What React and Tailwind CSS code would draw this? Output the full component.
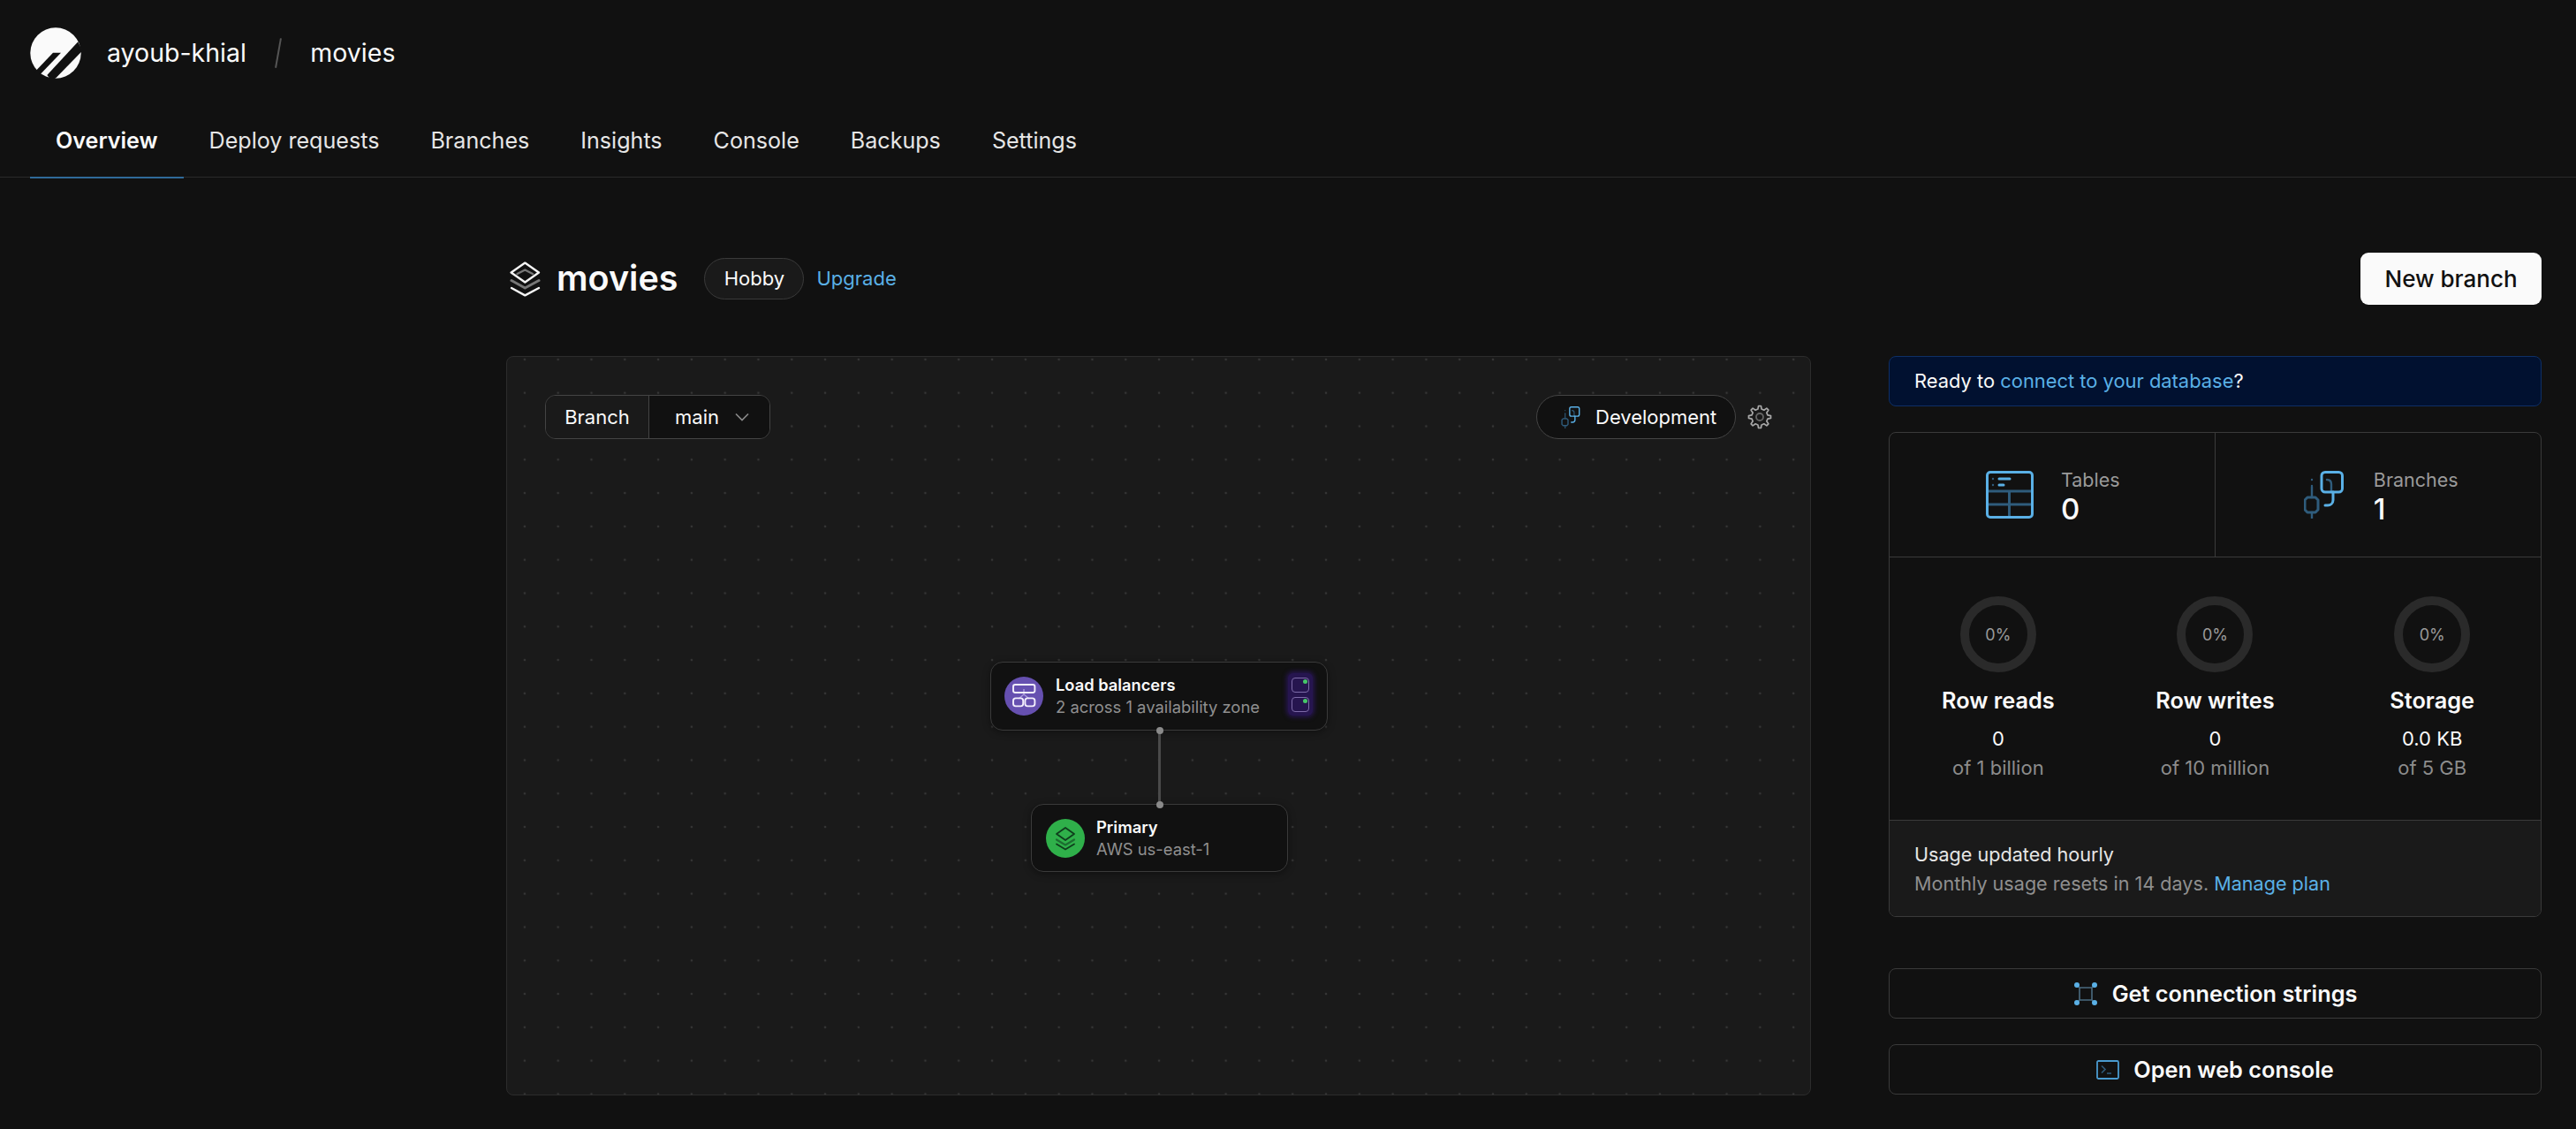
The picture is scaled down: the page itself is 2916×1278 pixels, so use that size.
import React from "react";

const BLUE = "#5ab0e6";
const DIM = "#2f5c7c";

function Logo() {
  return (
    <svg width="58" height="58" viewBox="0 0 58 58" className="shrink-0">
      <circle cx="29" cy="29" r="28.7" fill="#fafafa" />
      <polygon points="7.7,48 26,28.7 35,28.7 12.7,52 5,52" fill="#111111" />
      <polygon points="19.3,54 54.3,16.3 59.3,26.3 29.3,57.3 24,60" fill="#111111" />
    </svg>
  );
}

function Layers({ size = 35 }) {
  return (
    <svg width={size} height={size * 40 / 35} viewBox="0 0 35 40" fill="none" strokeLinejoin="round" strokeLinecap="round" className="ml-[4px] shrink-0">
      <path d="M17.3 1.6 33 12.4 17.3 23.6 1.6 12.4Z" stroke="#f5f5f5" strokeWidth="2.4" />
      <path d="M8.5 14 17.3 9.5 26 14" stroke="#777" strokeWidth="2.4" />
      <path d="M2 21.5 17.3 30 33 21.5" stroke="#777" strokeWidth="3" />
      <path d="M2 30 17.3 38.4 33 30" stroke="#f5f5f5" strokeWidth="2.4" />
    </svg>
  );
}

function BranchIcon({ w = 45, h = 54 }) {
  return (
    <svg width={w} height={h} viewBox="0 0 45 54" fill="none" strokeLinecap="round" strokeLinejoin="round" className="shrink-0">
      <path d="M9 10v.1M9 17v.1" stroke={DIM} strokeWidth="2.4" />
      <path d="M9 18V30M9 47V54" stroke={DIM} strokeWidth="2.4" />
      <path d="M4 30h9l3 3v11l-3 3H4l-3-3V33Z" stroke={DIM} strokeWidth="3" />
      <path d="M26 10c3 0 5 2 5 5v9" stroke={DIM} strokeWidth="2.4" />
      <rect x="20" y="1.5" width="23.5" height="22.5" rx="4" stroke={BLUE} strokeWidth="3" />
      <path d="M33 24V33c0 4-3 6-6 6h-3" stroke={BLUE} strokeWidth="3" />
    </svg>
  );
}

function TableIcon() {
  return (
    <svg width="54" height="54" viewBox="0 0 54 54" fill="none" className="shrink-0">
      <path d="M2 23H52M2 38H52M26.5 23V52" stroke={DIM} strokeWidth="3" />
      <rect x="1.5" y="1.5" width="51" height="51" rx="3.5" stroke={BLUE} strokeWidth="3" />
      <path d="M8 9v.1M8 16v.1" stroke={DIM} strokeWidth="2.4" strokeLinecap="round" />
      <path d="M15 9H27M15 16H20" stroke={BLUE} strokeWidth="3" strokeLinecap="round" />
    </svg>
  );
}

function ConnectIcon() {
  return (
    <svg width="28" height="26" viewBox="0 0 28 26" fill="none" className="shrink-0">
      <path d="M4 3 7 6H21L24 3M4 23 7 20H21L24 23M7 6V20M21 6V20" stroke="#4a6b80" strokeWidth="1.6" />
      <circle cx="4" cy="3" r="3" fill={BLUE} />
      <circle cx="24" cy="3" r="3" fill={BLUE} />
      <circle cx="4" cy="23" r="3" fill={BLUE} />
      <circle cx="24" cy="23" r="3" fill={BLUE} />
    </svg>
  );
}

function TerminalIcon() {
  return (
    <svg width="26" height="22" viewBox="0 0 26 22" fill="none" className="shrink-0">
      <rect x="1" y="1" width="24" height="20" rx="1.5" stroke="#4a9bd0" strokeWidth="1.8" />
      <path d="M6 6.5 10 10.5 6 14.5M12 15H17" stroke={DIM} strokeWidth="1.6" />
    </svg>
  );
}

function gearPath() {
  const pts = [];
  const n = 8;
  for (let i = 0; i < n; i++) {
    const a = (i / n) * Math.PI * 2 - Math.PI / 2;
    const s = Math.PI / n;
    [[-0.45, 9.2], [-0.22, 12.6], [0.22, 12.6], [0.45, 9.2]].forEach(([o, r]) => {
      pts.push(`${(14 + Math.cos(a + o * s * 1.3) * r).toFixed(2)} ${(14 + Math.sin(a + o * s * 1.3) * r).toFixed(2)}`);
    });
  }
  return "M" + pts.join("L") + "Z";
}

function Gear() {
  return (
    <svg width="28" height="28" viewBox="0 0 28 28" fill="none" className="shrink-0">
      <path d={gearPath()} stroke="#a8a8a8" strokeWidth="1.7" strokeLinejoin="round" />
      <circle cx="14" cy="14" r="4" stroke="#666" strokeWidth="1.8" />
    </svg>
  );
}

function LbIcon() {
  return (
    <div className="flex h-[44px] w-[44px] shrink-0 items-center justify-center rounded-full bg-[#6650b0]">
      <svg width="44" height="44" viewBox="0 0 44 44" fill="none">
        <path d="M22 14V20M22 20 16 25M22 20 28 25" stroke="#a998dc" strokeWidth="1.5" />
        <rect x="10" y="9" width="24.4" height="9" rx="2.2" stroke="#f2eefc" strokeWidth="1.9" />
        <rect x="10" y="24.4" width="11.2" height="9" rx="2.8" stroke="#f2eefc" strokeWidth="1.9" />
        <rect x="23.4" y="24.4" width="11" height="9" rx="2.8" stroke="#f2eefc" strokeWidth="1.9" />
      </svg>
    </div>
  );
}

function PrimaryIcon() {
  return (
    <div className="flex h-[44px] w-[44px] shrink-0 items-center justify-center rounded-full bg-[#2fb04a]">
      <svg width="24" height="28" viewBox="0 0 24 28" fill="none" strokeLinejoin="round" strokeLinecap="round">
        <path d="M12 2 22 9 12 16 2 9Z" stroke="#0f3d1c" strokeWidth="1.8" />
        <path d="M2 15.5 12 21.5 22 15.5" stroke="#1c6d30" strokeWidth="2.2" />
        <path d="M2 20.5 12 26.5 22 20.5" stroke="#0f3d1c" strokeWidth="1.8" />
      </svg>
    </div>
  );
}

function ServerIcon() {
  return (
    <div className="flex h-[48px] w-[28px] flex-col items-center justify-center gap-[5px] rounded-[6px] bg-[#26154f] shadow-[0_0_5px_2px_#26154f]">
      {[0, 1].map((i) => (
        <div key={i} className="relative h-[17px] w-[20px] rounded-[4px] border-[1.5px] border-[#7d6ba8]">
          <span className="absolute right-[1.5px] top-[1.5px] h-[5px] w-[5px] rounded-full bg-[#45c868]" />
        </div>
      ))}
    </div>
  );
}

function Stat({ icon, label, value, gap }) {
  return (
    <div className={"flex items-center justify-center " + gap}>
      {icon}
      <div>
        <div className="text-[21.5px] leading-[32px] text-[#9a9a9a]">{label}</div>
        <div className="text-[33px] font-medium leading-[34px] text-[#fafafa]">{value}</div>
      </div>
    </div>
  );
}

function Usage({ label, value, limit }) {
  return (
    <div className="flex flex-col items-center">
      <div className="flex h-[86px] w-[86px] items-center justify-center rounded-full border-[10px] border-[#2a2a2a] text-[18px] text-[#9a9a9a]">0%</div>
      <div className="mt-[14px] text-[25.3px] font-semibold leading-[36px] text-[#fafafa]">{label}</div>
      <div className="mt-[9px] text-[22px] leading-[33px] text-[#fafafa]">{value}</div>
      <div className="text-[22px] leading-[33px] text-[#8c8c8c]">{limit}</div>
    </div>
  );
}

function Tab({ label, active }) {
  return (
    <div className={"relative flex items-center px-[29px] text-[25.1px] " + (active ? "font-semibold text-[#fafafa]" : "text-[#e6e6e6]")}>
      {label}
      {active && <span className="absolute bottom-[-2px] left-0 right-0 h-[2px] bg-[#2f6a99]" />}
    </div>
  );
}

export default function App() {
  return (
    <div className="min-h-screen bg-[#111111] font-['Inter','Noto_Sans',sans-serif] text-[#fafafa] antialiased">
      <header className="flex h-[120px] items-center pl-[34px]">
        <Logo />
        <span className="ml-[29px] text-[28.5px]">ayoub-khial</span>
        <span className="ml-[35px] h-[34px] w-[1.5px] rotate-[10deg] bg-[#555]" />
        <span className="ml-[36px] text-[28.5px]">movies</span>
      </header>
      <nav className="flex h-[81px] border-b border-[#2a2a2a] pl-[34px]">
        <Tab label="Overview" active />
        <Tab label="Deploy requests" />
        <Tab label="Branches" />
        <Tab label="Insights" />
        <Tab label="Console" />
        <Tab label="Backups" />
        <Tab label="Settings" />
      </nav>
      <main className="pl-[573px] pr-[39px] pt-[85px]">
        <div className="mb-[58px] flex h-[59px] items-center justify-between">
          <div className="flex items-center">
            <Layers />
            <h1 className="ml-[18px] text-[39.5px] font-semibold">movies</h1>
            <span className="ml-[30px] flex h-[47px] w-[113px] items-center justify-center rounded-full border border-[#3a3a3a] bg-[#1a1a1a] text-[22px]">Hobby</span>
            <span className="ml-[14px] text-[22px] text-[#5ab0e6]">Upgrade</span>
          </div>
          <button className="h-[59px] w-[205px] rounded-[9px] bg-[#fafafa] text-[26px] font-medium text-[#111111]">New branch</button>
        </div>
        <div className="flex items-start justify-between">
          <section className="relative h-[837px] w-[1477px] rounded-[8px] border border-[#2c2c2c] bg-[#1a1a1a] bg-[radial-gradient(#363636_1.4px,transparent_1.6px)] bg-[length:37.8px_37.8px] bg-[position:1px_-16px]">
            <div className="flex items-start justify-between pl-[43px] pr-[43px] pt-[43px]">
              <div className="flex h-[50px] w-[255px] overflow-hidden rounded-[12px] border border-[#444] text-[22px]">
                <div className="flex w-[117px] items-center justify-center border-r border-[#444] bg-[#1a1a1a]">Branch</div>
                <div className="flex flex-1 items-center justify-center gap-[18px] bg-[#111111] pl-[6px]">
                  main
                  <svg width="16" height="10" viewBox="0 0 16 10" fill="none"><path d="M1 1.5 8 8.5 15 1.5" stroke="#888" strokeWidth="1.7" /></svg>
                </div>
              </div>
              <div className="flex items-center gap-[13px]">
                <div className="flex h-[50px] w-[226px] items-center gap-[15px] rounded-full border-[1.5px] border-[#444] bg-[#111111] pl-[25px] text-[22px]">
                  <BranchIcon w={26} h={25} />
                  Development
                </div>
                <Gear />
              </div>
            </div>

            <div className="absolute left-[547px] top-[345px] flex h-[78px] w-[382px] items-center rounded-[14px] border-[1.5px] border-[#3a3a3a] bg-[#111111] pl-[15px] shadow-[0_2px_8px_#0006]">
              <LbIcon />
              <div className="ml-[14px]">
                <div className="text-[18.3px] font-semibold leading-[25px]">Load balancers</div>
                <div className="text-[18.4px] leading-[25px] text-[#8f8f8f]">2 across 1 availability zone</div>
              </div>
              <div className="absolute right-[16px] top-[12px]"><ServerIcon /></div>
            </div>

            <div className="absolute left-[593px] top-[506px] flex h-[77px] w-[291px] items-center rounded-[14px] border-[1.5px] border-[#3a3a3a] bg-[#111111] pl-[16px] shadow-[0_2px_8px_#0006]">
              <PrimaryIcon />
              <div className="ml-[13px]">
                <div className="text-[18.4px] font-semibold leading-[25px]">Primary</div>
                <div className="text-[18.4px] leading-[25px] text-[#8f8f8f]">AWS us-east-1</div>
              </div>
            </div>

            <div className="absolute left-[737px] top-[423px] h-[84px] w-[3px] bg-[#4a4a4a]" />
            <span className="absolute left-[734.5px] top-[419px] h-[8px] w-[8px] rounded-full bg-[#8a8a8a]" />
            <span className="absolute left-[734.5px] top-[503px] h-[8px] w-[8px] rounded-full bg-[#8a8a8a]" />
          </section>

          <aside className="flex w-[739px] flex-col">
            <div className="flex h-[57px] items-center rounded-[8px] border-[1.5px] border-[#0e2f66] bg-[#011130] pl-[28px] text-[21.9px]">
              <span>Ready to <span className="text-[#5ab0e6]">connect to your database</span>?</span>
            </div>
            <div className="mt-[29px] overflow-hidden rounded-[8px] border border-[#3a3a3a]">
              <div className="grid h-[141px] grid-cols-2 border-b border-[#3a3a3a]">
                <div className="flex items-center justify-center border-r border-[#3a3a3a] pl-[2px]">
                  <Stat icon={<TableIcon />} label="Tables" value="0" gap="gap-[31px]" />
                </div>
                <div className="flex items-center justify-center pl-[7px]">
                  <Stat icon={<BranchIcon />} label="Branches" value="1" gap="gap-[34px]" />
                </div>
              </div>
              <div className="grid h-[298px] grid-cols-3 border-b border-[#3a3a3a] pt-[44px]">
                <Usage label="Row reads" value="0" limit="of 1 billion" />
                <Usage label="Row writes" value="0" limit="of 10 million" />
                <Usage label="Storage" value="0.0 KB" limit="of 5 GB" />
              </div>
              <div className="h-[108px] bg-[#1a1a1a] px-[28px] pt-[22px] text-[21.6px] leading-[33px]">
                <div className="text-[#e6e6e6]">Usage updated hourly</div>
                <div className="text-[#8f8f8f]">Monthly usage resets in 14 days. <span className="text-[#5ab0e6]">Manage plan</span></div>
              </div>
            </div>
            <button className="mt-[58px] flex h-[57px] items-center justify-center gap-[16px] rounded-[8px] border border-[#3a3a3a] text-[25.3px] font-semibold">
              <ConnectIcon />
              Get connection strings
            </button>
            <button className="mt-[29px] flex h-[57px] items-center justify-center gap-[16px] rounded-[8px] border border-[#3a3a3a] text-[25.3px] font-semibold">
              <TerminalIcon />
              Open web console
            </button>
          </aside>
        </div>
      </main>
    </div>
  );
}
